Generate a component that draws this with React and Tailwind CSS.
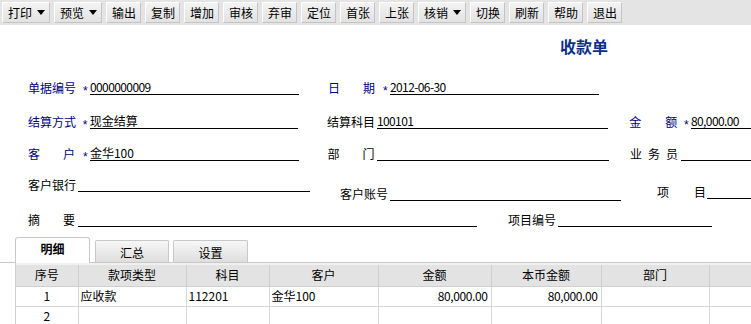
import React from 'react';

const tools = [
  { name: '打印', drop: true },
  { name: '预览', drop: true },
  { name: '输出' },
  { name: '复制' },
  { name: '增加' },
  { name: '审核' },
  { name: '弃审' },
  { name: '定位' },
  { name: '首张' },
  { name: '上张' },
  { name: '核销', drop: true },
  { name: '切换' },
  { name: '刷新' },
  { name: '帮助' },
  { name: '退出' },
];

const columns = [
  { title: '序号', w: 'w-[62px]' },
  { title: '款项类型', w: 'w-[108px]' },
  { title: '科目', w: 'w-[83px]' },
  { title: '客户', w: 'w-[109px]' },
  { title: '金额', w: 'w-[113px]' },
  { title: '本币金额', w: 'w-[110px]' },
  { title: '部门', w: 'w-[108px]' },
  { title: '', w: 'w-[60px]' },
];

const rows = [
  ['1', '应收款', '112201', '金华100', '80,000.00', '80,000.00', '', ''],
  ['2', '', '', '', '', '', '', ''],
];

// spaced label like "日      期"
const Spread = ({ chars, w, blue }) => (
  <div className={`flex justify-between ${w} ${blue ? 'text-[#000080]' : 'text-black'}`}>
    {chars.map((c, i) => (
      <span key={i}>{c}</span>
    ))}
  </div>
);

const Star = () => (
  <span
    className="w-[7px] shrink-0 relative top-[3px] text-[#000080] text-[12px] leading-[14px]"
    style={{ fontFamily: '"Liberation Sans", sans-serif' }}
  >
    *
  </span>
);

const Line = ({ w, children, mono }) => (
  <div className={`h-[15px] border-b border-black leading-[14px] whitespace-nowrap ${w} ${mono ? 'tracking-[-0.6px]' : ''}`}>
    {children}
  </div>
);

const App = () => {
  return (
    <div
      className="w-[751px] h-[324px] overflow-hidden bg-white text-[12px] leading-[14px] text-black"
      style={{ fontFamily: '"Noto Sans CJK SC", "Liberation Sans", sans-serif' }}
    >
      {/* Toolbar */}
      <div className="h-[25px] bg-[#e4e4e4] flex items-center gap-[4px] pl-[2px]">
        {tools.map((t) => (
          <div
            key={t.name}
            className={`h-[21px] flex items-center pl-[5px] bg-gradient-to-b from-[#f3f3f3] to-[#e2e2e2] border border-t-white border-l-white border-r-[#c4c4c4] border-b-[#c4c4c4] ${t.drop ? 'w-[48px]' : 'w-[35px]'}`}
          >
            <span>{t.name}</span>
            {t.drop && (
              <span className="ml-auto mr-[4px] w-0 h-0 border-l-[4px] border-r-[4px] border-t-[5px] border-l-transparent border-r-transparent border-t-black" />
            )}
          </div>
        ))}
      </div>

      {/* Title */}
      <div className="h-[40px] pl-[560px] pt-[12px]">
        <span className="text-[16px] leading-[18px] font-bold text-[#0b2f86]">收款单</span>
      </div>

      {/* Row 1 */}
      <div className="h-[30px] flex items-end pl-[28px]">
        <span className="w-[55px] text-[#000080]">单据编号</span>
        <Star />
        <Line w="w-[209px]" mono>0000000009</Line>
        <div className="ml-[29px] w-[55px]">
          <Spread chars={['日', '期']} w="w-[47px]" blue />
        </div>
        <Star />
        <Line w="w-[209px]" mono>2012-06-30</Line>
      </div>

      {/* Row 2 */}
      <div className="h-[34px] flex items-end pl-[28px]">
        <span className="w-[55px] text-[#000080]">结算方式</span>
        <Star />
        <Line w="w-[209px]">现金结算</Line>
        <span className="ml-[29px] w-[50px]">结算科目</span>
        <Line w="w-[232px]" mono>100101</Line>
        <div className="ml-[21px] w-[55px]">
          <Spread chars={['金', '额']} w="w-[48px]" blue />
        </div>
        <Star />
        <Line w="w-[60px] shrink-0" mono>80,000.00</Line>
      </div>

      {/* Row 3 */}
      <div className="h-[32px] flex items-end pl-[28px]">
        <div className="w-[55px]">
          <Spread chars={['客', '户']} w="w-[47px]" blue />
        </div>
        <Star />
        <Line w="w-[209px]">金华100</Line>
        <div className="ml-[29px] w-[50px]">
          <Spread chars={['部', '门']} w="w-[47px]" />
        </div>
        <Line w="w-[232px]" />
        <div className="ml-[21px] w-[51px]">
          <Spread chars={['业', '务', '员']} w="w-[48px]" />
        </div>
        <Line w="w-[70px] shrink-0" />
      </div>

      {/* Row 4 */}
      <div className="h-[40px] flex items-end pl-[28px]">
        <div className="flex items-end mb-[9px]">
          <span className="w-[50px]">客户银行</span>
          <Line w="w-[232px]" />
        </div>
        <div className="flex items-end ml-[30px]">
          <span className="w-[50px]">客户账号</span>
          <Line w="w-[231px]" />
        </div>
        <div className="flex items-end ml-[36px] mb-[2px]">
          <div className="w-[50px]">
            <Spread chars={['项', '目']} w="w-[49px]" />
          </div>
          <Line w="w-[60px] shrink-0" />
        </div>
      </div>

      {/* Row 5 */}
      <div className="h-[26px] flex items-end pl-[28px]">
        <div className="w-[50px]">
          <Spread chars={['摘', '要']} w="w-[47px]" />
        </div>
        <Line w="w-[399px]" />
        <span className="ml-[31px] w-[50px]">项目编号</span>
        <Line w="w-[154px]" />
      </div>

      {/* Tabs */}
      <div className="mt-[10px] pl-[15px] flex items-end h-[26px] border-b border-[#c8c8c8]">
        <div className="w-[75px] h-[26px] -mb-px bg-white border border-b-0 border-[#c8c8c8] rounded-t-[3px] flex justify-center pt-[4px] font-bold">
          明细
        </div>
        <div className="ml-[5px] w-[74px] h-[22px] bg-gradient-to-b from-[#f7f7f7] to-[#dedede] border border-b-0 border-[#c8c8c8] rounded-t-[2px] flex justify-center pt-[5px]">
          汇总
        </div>
        <div className="ml-[4px] w-[75px] h-[22px] bg-gradient-to-b from-[#f7f7f7] to-[#dedede] border border-b-0 border-[#c8c8c8] rounded-t-[2px] flex justify-center pt-[5px]">
          设置
        </div>
      </div>

      {/* Grid */}
      <div className="ml-[15px] border-l border-[#d0d0d0] bg-[#f0f0f0] pt-[2px]">
        <table className="table-fixed border-collapse w-[753px]">
          <thead>
            <tr className="h-[21px] bg-[#e3e3e3]">
              {columns.map((c, i) => (
                <th
                  key={i}
                  className={`${c.w} p-0 font-normal text-center border-r border-b border-[#cfcfcf]`}
                >
                  {c.title}
                </th>
              ))}
            </tr>
          </thead>
          <tbody>
            {rows.map((r, ri) => (
              <tr key={ri} className="h-[20px] bg-white">
                {r.map((v, ci) => (
                  <td
                    key={ci}
                    className={`p-0 border-r border-b border-[#d6d6d6] ${
                      ci === 0 ? 'text-center' : ci === 4 || ci === 5 ? 'text-right pr-[3px] tracking-[-0.4px]' : 'text-left pl-[2px]'
                    }`}
                  >
                    {v}
                  </td>
                ))}
              </tr>
            ))}
          </tbody>
        </table>
      </div>
    </div>
  );
};

export default App;
